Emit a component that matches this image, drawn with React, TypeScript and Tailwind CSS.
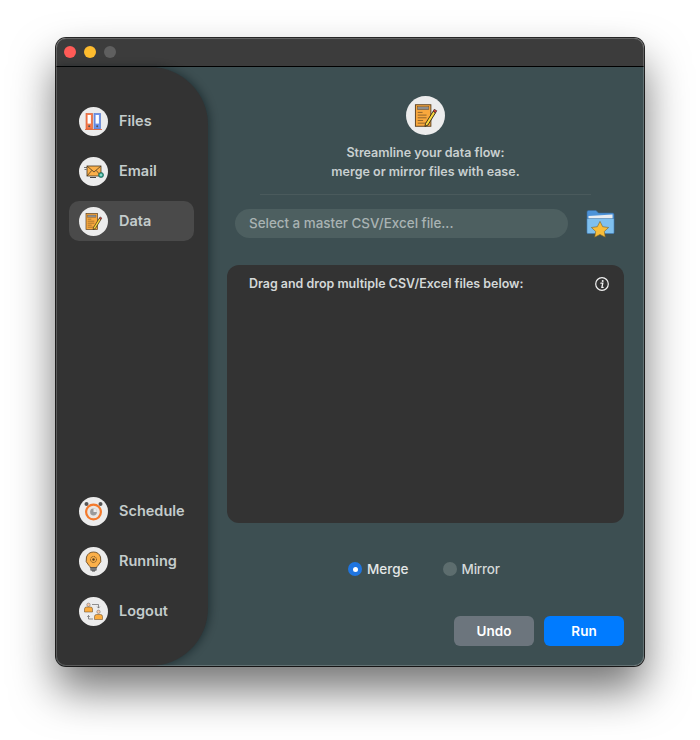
import React from "react";

const FilesIcon = () => (
  <svg viewBox="0 0 29 29" className="w-[29px] h-[29px]">
    <circle cx="14.5" cy="14.5" r="14.5" fill="#ececec" />
    <rect x="7" y="6.5" width="6.5" height="15.5" fill="#f47a4c" stroke="#d9572a" strokeWidth="0.6" />
    <rect x="8.6" y="8" width="3.3" height="8.6" fill="#fff" />
    <circle cx="10.2" cy="19.2" r="1" fill="#555" />
    <rect x="15" y="6.5" width="6.5" height="15.5" fill="#6e93ea" stroke="#4f74cc" strokeWidth="0.6" />
    <rect x="16.6" y="8" width="3.3" height="8.6" fill="#fff" />
    <circle cx="18.2" cy="19.2" r="1" fill="#555" />
    <path d="M6 22.5h17" stroke="#d9572a" strokeWidth="0.8" />
  </svg>
);

const EmailIcon = () => (
  <svg viewBox="0 0 29 29" className="w-[29px] h-[29px]">
    <circle cx="14.5" cy="14.5" r="14.5" fill="#ececec" />
    <path d="M5 10.5h3M5.5 12.5h2" stroke="#555" strokeWidth="0.8" />
    <rect x="8" y="9" width="14" height="10" fill="#fbb04a" stroke="#4a3a24" strokeWidth="0.8" />
    <path d="M8 9l7 6 7-6M8 19l4.8-5.6M22 19l-4.8-5.6" fill="none" stroke="#4a3a24" strokeWidth="0.8" />
    <path d="M11 20.5h6" stroke="#444" strokeWidth="1" />
    <circle cx="22" cy="18" r="2.5" fill="#2fa58e" stroke="#1e5a50" strokeWidth="0.7" />
    <path d="M20.8 18h2.4M22 16.8v2.4" stroke="#dff" strokeWidth="0.6" />
  </svg>
);

const DataGlyph = () => (
  <>
    <rect x="7" y="6.5" width="11.5" height="16" fill="#f9a83d" stroke="#5a4020" strokeWidth="0.7" />
    <rect x="8.5" y="8" width="8.5" height="2.2" fill="#8d8d8d" stroke="#5a4020" strokeWidth="0.3" />
    <path d="M8.7 12.2h3.6M8.7 14.2h6.6M8.7 16.2h6.6M8.7 18.2h4M8.7 20.2h7" stroke="#7a5626" strokeWidth="0.6" />
    <path d="M14.5 20.5l5.7-9.2 1.8 1.1-5.7 9.2-2.2 1z" fill="#f9d73d" stroke="#33291a" strokeWidth="0.7" />
    <path d="M20.2 11.3l.8-1.4 1.9 1.1-.9 1.4z" fill="#e0413d" stroke="#33291a" strokeWidth="0.5" />
  </>
);

const DataIcon = () => (
  <svg viewBox="0 0 29 29" className="w-[29px] h-[29px]">
    <circle cx="14.5" cy="14.5" r="14.5" fill="#ececec" />
    <DataGlyph />
  </svg>
);

const ScheduleIcon = () => (
  <svg viewBox="0 0 29 29" className="w-[29px] h-[29px]">
    <circle cx="14.5" cy="14.5" r="14.5" fill="#ececec" />
    <circle cx="7.5" cy="7" r="2" fill="#555" />
    <circle cx="21.5" cy="7" r="2" fill="#555" />
    <circle cx="14.5" cy="15" r="7.4" fill="#e9e6e2" stroke="#f47a2c" strokeWidth="2.2" />
    <circle cx="14.5" cy="15" r="3.4" fill="#9a9a9a" />
    <path d="M14.5 15v-3.4a3.4 3.4 0 0 1 3.4 3.4z" fill="#ececec" />
  </svg>
);

const RunningIcon = () => (
  <svg viewBox="0 0 29 29" className="w-[29px] h-[29px]">
    <circle cx="14.5" cy="14.5" r="14.5" fill="#ececec" />
    <path d="M14.5 5a7.5 7.5 0 0 0-4.7 13.3c.8.7 1.4 1.4 1.4 2.2h6.6c0-.8.6-1.5 1.4-2.2A7.5 7.5 0 0 0 14.5 5z" fill="#fbb04a" stroke="#5a4020" strokeWidth="0.8" />
    <rect x="11.8" y="20.5" width="5.4" height="2.8" fill="#777" stroke="#444" strokeWidth="0.5" />
    <path d="M13 24h3" stroke="#444" strokeWidth="1" />
    <circle cx="14.5" cy="12.5" r="3" fill="none" stroke="#5a4020" strokeWidth="1" strokeDasharray="1 0.8" />
    <circle cx="14.5" cy="12.5" r="1.2" fill="#5a4020" />
  </svg>
);

const LogoutIcon = () => (
  <svg viewBox="0 0 29 29" className="w-[29px] h-[29px]">
    <circle cx="14.5" cy="14.5" r="14.5" fill="#ececec" />
    <circle cx="9.5" cy="7.8" r="1.7" fill="#f7c8a8" stroke="#666" strokeWidth="0.5" />
    <path d="M5.5 15v-3a2 2 0 0 1 2-2h4a2 2 0 0 1 2 2v3z" fill="#fbac3e" stroke="#5a4020" strokeWidth="0.5" />
    <circle cx="19.5" cy="14.8" r="1.7" fill="#f7c8a8" stroke="#666" strokeWidth="0.5" />
    <path d="M15.5 22.5v-3a2 2 0 0 1 2-2h4a2 2 0 0 1 2 2v3z" fill="#fbac3e" stroke="#5a4020" strokeWidth="0.5" />
    <path d="M13 7.5h6.5v3.5M18.2 9.6l1.3 1.5 1.3-1.5M14 22h-4.5v-3.5M8.2 20l1.3-1.5 1.3 1.5" fill="none" stroke="#666" strokeWidth="0.7" />
  </svg>
);

const FolderStar = () => (
  <svg viewBox="0 0 29 29" className="w-[29px] h-[29px]">
    <path d="M1 3a1.5 1.5 0 0 1 1.5-1.5h7.5l2.5 2.5h14A1.5 1.5 0 0 1 28 5.500v18a1 1 0 0 1-1 1H2a1 1 0 0 1-1-1z" fill="#4d93d8" stroke="#3a6d9f" strokeWidth="0.6" />
    <path d="M2.500 10V7l24-1.500V10z" fill="#e9edf1" />
    <path d="M1 9.500h27v14a1 1 0 0 1-1 1H2a1 1 0 0 1-1-1z" fill="#7fc0ee" stroke="#3a6d9f" strokeWidth="0.5" />
    <path d="M14 12.400l2.700 5.300 5.900.8-4.300 4 1 5.700-5.300-2.700-5.300 2.700 1-5.700-4.300-4 5.900-.8z" fill="#f8bd3a" stroke="#7a6226" strokeWidth="0.6" />
  </svg>
);

const InfoIcon = () => (
  <svg viewBox="0 0 14 14" className="w-[14px] h-[14px]">
    <circle cx="7" cy="7" r="6.300" fill="none" stroke="#f2f2f2" strokeWidth="1.200" />
    <circle cx="7.700" cy="3.900" r="1" fill="#f2f2f2" />
    <path d="M5.900 6.200h1.900L6.900 10.300h1.300" fill="none" stroke="#f2f2f2" strokeWidth="1.300" strokeLinecap="round" />
  </svg>
);

const NavItem = ({ icon, label, active }: { icon: React.ReactNode; label: string; active?: boolean }) => (
  <div className={`flex items-center gap-[11px] h-[40px] w-[125px] pl-[10px] rounded-[10px] ${active ? "bg-[#4a4a4a]" : ""}`}>
    {icon}
    <span className="text-[14.5px] font-semibold text-[#c4cccc] leading-none">{label}</span>
  </div>
);

export default function App() {
  return (
    <div className="w-[700px] h-[740px] bg-white pt-[38px] pl-[56px] font-['Inter','Liberation_Sans',sans-serif]">
      <div className="relative w-[588px] h-[628px] rounded-[10px] overflow-hidden flex flex-col shadow-[0_24px_44px_rgba(0,0,0,0.55),0_0_0_1px_rgba(30,30,30,0.95)]">
        <div className="h-[29px] shrink-0 bg-[#3c3c3c] border-b border-black flex items-center pl-[8px] gap-[8px]">
          <span className="w-[12px] h-[12px] rounded-full bg-[#ff5b57]" />
          <span className="w-[12px] h-[12px] rounded-full bg-[#febc2e]" />
          <span className="w-[12px] h-[12px] rounded-full bg-[#5f5f5f]" />
        </div>
        <div className="flex-1 flex bg-[#3d4f52] min-h-0">
          <div className="w-[152px] shrink-0 bg-[#333333] rounded-r-[58px] shadow-[2px_0_8px_rgba(0,15,20,0.45)] flex flex-col justify-between pl-[13px] pt-[34px] pb-[35px]">
            <div className="flex flex-col gap-[10px]">
              <NavItem icon={<FilesIcon />} label="Files" />
              <NavItem icon={<EmailIcon />} label="Email" />
              <NavItem icon={<DataIcon />} label="Data" active />
            </div>
            <div className="flex flex-col gap-[10px]">
              <NavItem icon={<ScheduleIcon />} label="Schedule" />
              <NavItem icon={<RunningIcon />} label="Running" />
              <NavItem icon={<LogoutIcon />} label="Logout" />
            </div>
          </div>
          <div className="flex-1 flex flex-col pl-[19px] pr-[20px] pt-[29px]">
            <div className="flex flex-col items-center">
              <svg viewBox="0 0 29 29" className="w-[39px] h-[39px]">
                <circle cx="14.5" cy="14.5" r="14.5" fill="#ececec" />
                <DataGlyph />
              </svg>
              <p className="mt-[8px] text-center text-[12.5px] leading-[19px] font-semibold text-[#c9d0d0]">
                Streamline your data flow:
                <br />
                merge or mirror files with ease.
              </p>
            </div>
            <div className="mt-[13px] mx-[33px] h-px bg-[#4a5a5c]" />
            <div className="mt-[14px] flex items-center pl-[8px] pr-[9px] gap-[18px]">
              <div className="h-[29px] flex-1 rounded-full bg-[#4d5f60] flex items-center pl-[14px] text-[13.4px] font-medium text-[#a9b3b3]">
                Select a master CSV/Excel file...
              </div>
              <FolderStar />
            </div>
            <div className="mt-[27px] h-[258px] rounded-[12px] bg-[#333333] flex items-start justify-between pl-[22px] pr-[15px] pt-[12px]">
              <span className="text-[12.45px] leading-[14px] font-semibold text-[#d4d8d8]">
                Drag and drop multiple CSV/Excel files below:
              </span>
              <InfoIcon />
            </div>
            <div className="mt-[38px] flex items-center pl-[121px] h-[16px]">
              <span className="w-[14px] h-[14px] rounded-full bg-[#1f75e0] flex items-center justify-center">
                <span className="w-[5px] h-[5px] rounded-full bg-white" />
              </span>
              <span className="ml-[5px] text-[13.5px] font-medium text-[#e4e7e7]">Merge</span>
              <span className="ml-[34px] w-[14px] h-[14px] rounded-full bg-[#5d6d6e]" />
              <span className="ml-[5px] text-[13.5px] tracking-[-0.2px] font-medium text-[#d4d9d9]">Mirror</span>
            </div>
            <div className="mt-[39px] flex justify-end gap-[10px]">
              <button className="w-[80px] h-[30px] rounded-[6px] bg-[#6c757d] text-white text-[13.5px] font-semibold">Undo</button>
              <button className="w-[80px] h-[30px] rounded-[6px] bg-[#007bff] text-white text-[13.5px] font-semibold">Run</button>
            </div>
          </div>
        </div>
        <div className="absolute inset-0 rounded-[10px] border border-white/20 pointer-events-none" />
      </div>
    </div>
  );
}
